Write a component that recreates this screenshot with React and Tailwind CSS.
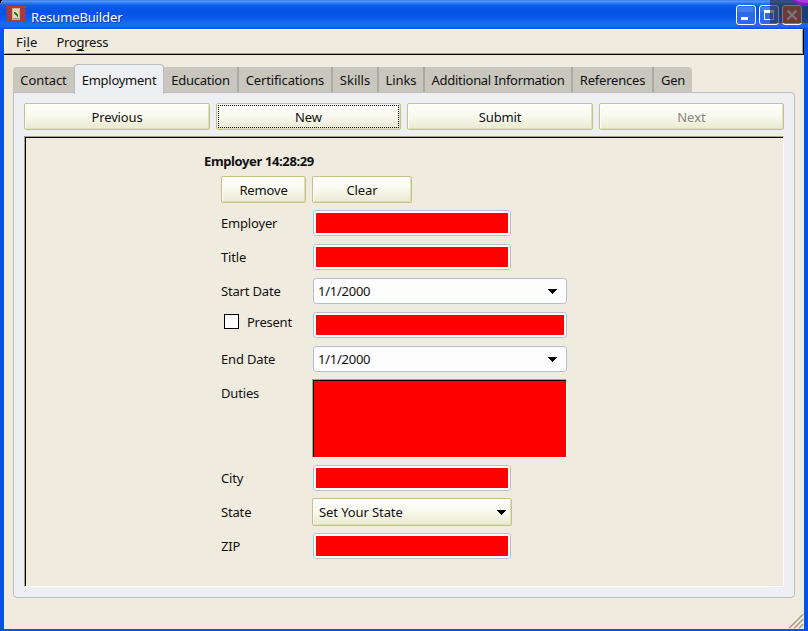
import React from "react";

const BTN =
  "rounded-[2px] border border-[#c3c28c] bg-gradient-to-b from-[#fefffb] via-[#f8f9ee] to-[#e9ead0] shadow-[inset_1px_1px_0_#ffffff,inset_-1px_-1px_0_#dfdfb8]";

function Label({ children, className = "" }) {
  return <span className={`block whitespace-pre leading-[18px] ${className}`}>{children}</span>;
}

function Button({ children, className = "", focused = false, disabled = false }) {
  return (
    <button className={`flex items-center justify-center p-[1px] ${BTN} ${disabled ? "text-[#85857c]" : "text-[#111]"} ${className}`}>
      <span className={`flex h-full w-full items-center justify-center pt-[2px] ${focused ? "border border-dotted border-black" : "border border-transparent"}`}>
        {children}
      </span>
    </button>
  );
}

function RedField({ className = "w-[198px]" }) {
  return (
    <div className={`ml-px h-[26px] rounded-[3px] border border-[#b9bfc6] bg-white p-[2px] shadow-[0_0_0_1px_#ebecea] ${className}`}>
      <div className="h-full bg-[#ff0000]" />
    </div>
  );
}

function Arrow() {
  return (
    <svg width="9" height="5" viewBox="0 0 9 5" shapeRendering="crispEdges" className="block">
      <path d="M0 0h9v1h-1v1h-1v1h-1v1h-1v1h-1v-1h-1v-1h-1v-1h-1v-1h-1z" fill="#000" />
    </svg>
  );
}

function DateField() {
  return (
    <div className="ml-px flex h-[26px] w-[254px] items-center justify-between rounded-[3px] border border-[#b9bfc6] bg-[#fdfdfd] pl-[4px] pr-[9px] shadow-[0_0_0_1px_#ebecea]">
      <Label className="tracking-[-0.25px]">1/1/2000</Label>
      <Arrow />
    </div>
  );
}

function Row({ label, className = "h-[34px]", children }) {
  return (
    <div className={`flex items-start ${className}`}>
      <div className="w-[91px] shrink-0 pt-[4px]">
        <Label className="tracking-[-0.17px]">{label}</Label>
      </div>
      {children}
    </div>
  );
}

const TABS = [
  ["Contact", "w-[61px] rounded-tl-[4px]", "tracking-[-0.1px]"],
  ["Employment", "", ""],
  ["Education", "w-[75px]", "border-r-2 tracking-[-0.25px]"],
  ["Certifications", "w-[94px]", "border-r-2 tracking-[-0.15px]"],
  ["Skills", "w-[46px]", "border-r-2"],
  ["Links", "w-[46px]", "border-r-2 tracking-[-0.1px]"],
  ["Additional Information", "w-[148px]", "border-r-2 tracking-[-0.29px]"],
  ["References", "w-[81px]", "border-r-2 tracking-[-0.2px]"],
  ["Gen", "w-[38px] rounded-tr-[4px]", "tracking-[-0.2px]"],
];

function TitleBar() {
  return (
    <header className="relative flex h-[29px] shrink-0 items-start overflow-hidden bg-[linear-gradient(to_bottom,#2b6fe8_0px,#5b98fb_1px,#2c77f4_3px,#0a5aea_6px,#0353e3_12px,#0a5aeb_18px,#1c68f1_23px,#1c66f0_27px,#0748c8_29px)]">
      <svg className="ml-[6px] mt-[6px]" width="20" height="16" viewBox="0 0 20 16" shapeRendering="crispEdges">
        <path d="M0 0h20v2h-1v2h1v2h-1v2h1v2h-1v2h1v4H0v-3h1v-2H0V9h1V7H0V5h1V3H0z" fill="#b8373b" />
        <path d="M1 2.5h5M1 5.5h5M1 8.5h5M1 11.5h5M1 14.5h5M14 2.5h5M14 5.5h5M14 8.5h5M14 11.5h5M14 14.5h5" stroke="#9d363c" />
        <path d="M6 2h8v12H6z" fill="#c9b48c" />
        <path d="M7 3h6v9H7z" fill="#dfd6b2" />
        <path d="M8 6h2v1h1v1h1v3h-1v-1h-1V9H9V8H8z" fill="#2b842f" />
        <path d="M7 12h6v1H7z" fill="#a8966a" />
      </svg>
      <span className="ml-[5px] mt-[8px] text-[13px] leading-[18px] tracking-[-0.13px] text-white [text-shadow:1px_1px_0_#0b3ba5]">ResumeBuilder</span>
      <div className="ml-auto mr-[6px] mt-[5px] flex gap-[3px]">
        <svg width="20" height="20" viewBox="0 0 20 20">
          <rect x=".5" y=".5" width="19" height="19" rx="2.5" fill="#2c6be7" stroke="#fff" />
          <path d="M1.5 2h16v5h-16z" fill="#5c91f4" opacity=".5" />
          <path d="M5 12h7v3H5z" fill="#fff" />
        </svg>
        <svg width="20" height="20" viewBox="0 0 20 20">
          <rect x=".5" y=".5" width="19" height="19" rx="2.5" fill="#2c6be7" stroke="#fff" />
          <path d="M1.5 2h16v5h-16z" fill="#5c91f4" opacity=".5" />
          <path d="M5 5h10v10H5zM6 8v6h8V8z" fill="#fff" fillRule="evenodd" />
        </svg>
        <svg width="20" height="20" viewBox="0 0 20 20">
          <rect x=".5" y=".5" width="19" height="19" rx="2.5" fill="#e2532f" stroke="#fff" />
          <path d="M5.5 5.5l9 9M14.5 5.5l-9 9" stroke="#fff" strokeWidth="2.4" />
        </svg>
      </div>
      <div className="absolute right-0 top-0 h-[23px] w-[38px] bg-[#2b2f3b]/65" />
      <svg className="absolute right-0 top-0" width="18" height="7" viewBox="0 0 18 7">
        <path d="M2 0h16v6C10 6 5 4 2 0z" fill="#7d22b9" />
        <path d="M5 0h13v3C12 3 8 2 5 0z" fill="#a43fdc" />
      </svg>
      <svg className="absolute left-0 top-0" width="5" height="4" viewBox="0 0 5 4" shapeRendering="crispEdges">
        <path d="M0 0h2v1H1v2H0z" fill="#000" />
      </svg>
    </header>
  );
}

export default function App() {
  return (
    <div className="flex h-[631px] w-[808px] flex-col overflow-hidden bg-[#0653ea] text-[13px] text-[#111] [font-family:'Noto_Sans',sans-serif]">
      <TitleBar />
      <main className="mx-[4px] mb-[2px] flex min-h-0 flex-1 flex-col bg-[#efebdf]">
        <nav className="h-[26px] shrink-0 border-b border-r border-black">
          <div className="flex h-[25px] items-start gap-[19px] border-b border-l border-r border-t border-b-[#aca387] border-l-white border-r-[#aca387] border-t-white pl-[11px] pt-[3px]">
            <span className="leading-[18px] tracking-[0.15px]">
              Fi<span className="underline underline-offset-[3px]">l</span>e
            </span>
            <span className="leading-[18px] tracking-[-0.25px]">
              Pro<span className="underline underline-offset-[3px]">g</span>ress
            </span>
          </div>
        </nav>

        <div className="ml-[9px] mt-[9px] flex h-[29px] shrink-0 items-end">
          {TABS.map(([name, size, edge]) =>
            name === "Employment" ? (
              <div key={name} className="relative z-10 -mb-px flex h-[30px] w-[90px] items-center justify-center rounded-t-[4px] border border-b-0 border-[#b9bcc2] bg-[#eeeff2]">
                <Label className="tracking-[-0.25px]">{name}</Label>
              </div>
            ) : (
              <div key={name} className={`h-[26px] overflow-hidden bg-[#c9c6bd] ${size}`}>
                <div className={`flex h-full items-center justify-center border-[#aaa9a3] ${edge}`}>
                  <Label>{name}</Label>
                </div>
              </div>
            )
          )}
        </div>

        <section className="ml-[9px] -mt-px h-[506px] w-[782px] shrink-0 rounded-b-[4px] rounded-tr-[4px] border border-[#bbbcc0] bg-[#eeeff2] pl-[10px] pt-[10px]">
          <div className="flex h-[27px] gap-[6px]">
            <Button className="w-[186px] tracking-[-0.15px]">Previous</Button>
            <Button className="w-[185px]" focused>New</Button>
            <Button className="w-[186px] tracking-[-0.15px]">Submit</Button>
            <Button className="w-[185px]" disabled>Next</Button>
          </div>

          <div className="mt-[6px] h-[451px] w-[760px] border border-b-white border-l-[#aca387] border-r-white border-t-[#aca387] bg-[#efebdf]">
            <div className="h-full border-l border-t border-black pl-[178px] pt-[14px]">
              <h2 className="h-[24px] whitespace-pre font-bold leading-[18px] tracking-[-0.37px]">Employer 14:28:29</h2>
              <div className="pl-[17px]">
                <div className="flex h-[34px] items-start gap-[6px]">
                  <Button className="h-[27px] w-[85px] tracking-[-0.15px]">Remove</Button>
                  <Button className="h-[27px] w-[100px] tracking-[-0.1px]">Clear</Button>
                </div>
                <Row label="Employer"><RedField /></Row>
                <Row label="Title"><RedField /></Row>
                <Row label="Start Date"><DateField /></Row>
                <div className="flex h-[34px] items-start">
                  <div className="flex w-[91px] shrink-0 items-start pl-[3px]">
                    <div className="mt-[2px] h-[15px] w-[15px] border border-black bg-white" />
                    <Label className="ml-[8px] mt-px tracking-[-0.25px]">Present</Label>
                  </div>
                  <RedField className="w-[254px]" />
                </div>
                <Row label="End Date"><DateField /></Row>
                <Row label="Duties" className="h-[85px]">
                  <div className="-mt-px h-[79px] w-[255px] border border-b-white border-l-[#aca387] border-r-white border-t-[#aca387]">
                    <div className="h-full border-l border-t border-black bg-[#ff0000]" />
                  </div>
                </Row>
                <Row label="City"><RedField /></Row>
                <Row label="State">
                  <div className={`-mt-px flex h-[28px] w-[200px] items-center justify-between pl-[6px] pr-[5px] ${BTN}`}>
                    <Label className="-mt-px tracking-[-0.1px]">Set Your State</Label>
                    <Arrow />
                  </div>
                </Row>
                <Row label="ZIP"><RedField /></Row>
              </div>
            </div>
          </div>
        </section>

        <div className="mt-auto flex justify-end">
          <svg width="16" height="16" viewBox="0 0 16 16">
            <path d="M1 15L15 1M6 15L15 6M11 15L15 11" stroke="#aca387" strokeWidth="2" />
            <path d="M0 14.5L14.5 0M5 14.5L15 4.5M10 14.5L15 9.5" stroke="#fff" />
          </svg>
        </div>
      </main>
    </div>
  );
}
